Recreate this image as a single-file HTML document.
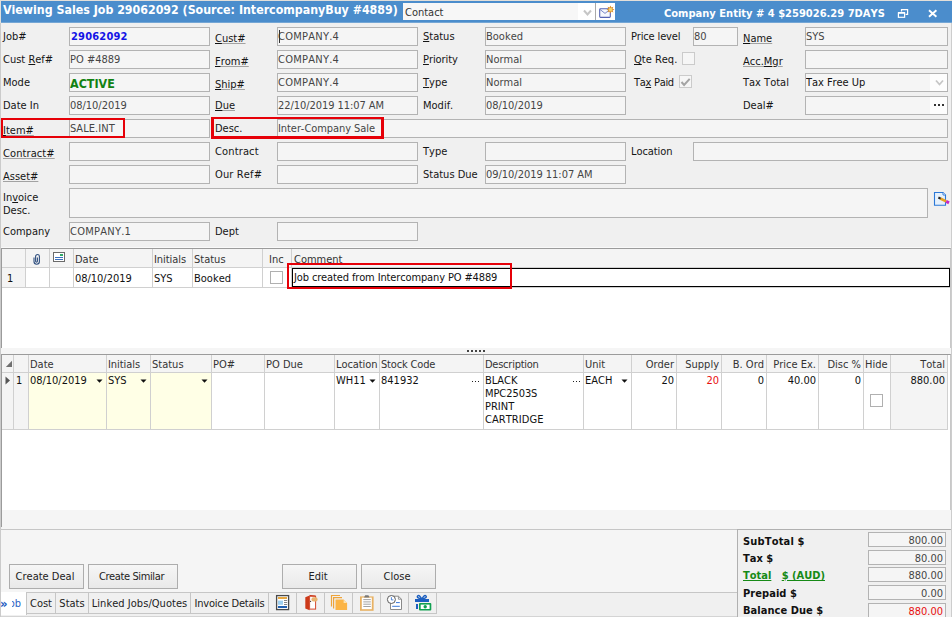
<!DOCTYPE html>
<html lang="en"><head><meta charset="utf-8"><title>Viewing Sales Job 29062092</title>
<style>
*{box-sizing:border-box;margin:0;padding:0}
html,body{width:952px;height:617px;overflow:hidden;background:#f0f0f0}
body{position:relative;font-family:"DejaVu Sans Condensed", "Liberation Sans", sans-serif;font-size:11px;line-height:13px;color:#111;font-kerning:none}
.a{position:absolute;white-space:nowrap}
.f{position:absolute;height:19px;border:1px solid #b3b3b3;background:#f5f5f5;color:#454545;padding:2px 0 0 0;white-space:nowrap;overflow:hidden}
.l{position:absolute;white-space:nowrap;color:#151515}
u{text-decoration:underline;text-decoration-thickness:1px;text-underline-offset:1px}
.lk{text-decoration:underline;text-decoration-thickness:1px;text-underline-offset:1px;text-decoration-color:#a2a2a2}
.lk u{text-decoration-color:#111}
.cb{position:absolute;width:13px;height:13px;border:1px solid #cbcbcb;background:#f6f6f6}
.vl{position:absolute;width:1px;background:#d0d0d0}
.hl{position:absolute;height:1px;background:#d0d0d0}
.h{position:absolute;white-space:nowrap;color:#333}
.c{position:absolute;white-space:nowrap;color:#111}
.r{text-align:right}
.btn{position:absolute;height:25px;border:1px solid #adadad;background:linear-gradient(#f6f6f6,#e9e9e9);text-align:center;padding:5px 3px 0 0;color:#222}
.tf{position:absolute;left:868px;width:78px;height:15px;border:1px solid #b3b3b3;background:#f5f5f5;color:#454545;text-align:right;padding:1px 2px 0 0;line-height:13px}
.tl{position:absolute;left:743px;font-weight:bold;letter-spacing:0;color:#111;white-space:nowrap}
.tab{position:absolute;top:593px;height:20px;border-right:1px solid #c6c6c6;padding-top:4px;color:#222;white-space:nowrap;text-align:center}
.red{position:absolute;border:2px solid #e60008}
</style></head>
<body>
<div class="a" style="left:0;top:0;width:952px;height:23px;background:#e3dfd9"></div>
<div class="a" style="left:1px;top:1px;width:951px;height:21px;background:#4b8dcc"></div>
<div class="a" style="left:1px;top:22px;width:951px;height:1px;background:#74a6d5"></div>
<div class="a" id="t1" style="letter-spacing:0;left:3px;top:2px;font-weight:bold;font-size:12.3px;line-height:16px;color:#fff">Viewing Sales Job 29062092 (Source: IntercompanyBuy #4889)</div>
<div class="a" id="t2" style="letter-spacing:0;left:664px;top:6px;font-weight:bold;font-size:11.05px;line-height:15px;color:#fff">Company Entity # 4 $259026.29 7DAYS</div>
<div class="a" style="left:403px;top:3px;width:212px;height:17px;background:#fff"></div>
<div class="a" style="left:403px;top:3px;width:175px;height:17px;background:#f7f7f7;color:#333;padding:3px 0 0 2px;font-size:11px">Contact</div>
<div class="a" style="left:595px;top:3px;width:1px;height:17px;background:#a9a9a9"></div>
<svg class="a" style="left:583px;top:9px" width="9" height="8" viewBox="0 0 9 8"><path d="M1 1.5 L4.5 5.5 L8 1.5" fill="none" stroke="#c6c6c6" stroke-width="2"/></svg>
<div class="l" style="left:3px;top:30px;">Job#</div>
<div class="l" style="left:3px;top:53px;">Cust <u>R</u>ef#</div>
<div class="l" style="left:3px;top:76px;">Mode</div>
<div class="l" style="left:3px;top:99px;">Date In</div>
<div class="l" style="left:3px;top:124px;"><span class=lk><u>I</u>tem#</span></div>
<div class="l" style="left:3px;top:147px;"><span style="letter-spacing:0.09px"><span class=lk>Contract#</span></span></div>
<div class="l" style="left:3px;top:170px;"><span class=lk>Asset#</span></div>
<div class="l" style="left:3px;top:191px;">In<u>v</u>oice<br>Desc.</div>
<div class="l" style="left:3px;top:225px;">Company</div>
<div class="f" style="left:69px;top:27px;width:141px;height:19px;"><b style="color:#1414e6;letter-spacing:0.2px;padding-left:1px">29062092</b></div>
<div class="f" style="left:69px;top:50px;width:141px;height:19px;">PO #4889</div>
<div class="f" style="left:69px;top:73px;width:141px;height:19px;"><b style="color:#128212;font-size:12.4px;position:relative;top:1px">ACTIVE</b></div>
<div class="f" style="left:69px;top:96px;width:141px;height:19px;"><span style="letter-spacing:-0.03px">08/10/2019</span></div>
<div class="f" style="left:69px;top:119px;width:141px;height:19px;"><span style="letter-spacing:0.07px">SALE.INT</span></div>
<div class="f" style="left:69px;top:142px;width:141px;height:19px;"></div>
<div class="f" style="left:69px;top:165px;width:141px;height:19px;"></div>
<div class="f" style="left:69px;top:188px;width:859px;height:30px;"></div>
<div class="f" style="left:69px;top:222px;width:141px;height:19px;"><span style="letter-spacing:0.25px">COMPANY.1</span></div>
<div class="l" style="left:215px;top:32px;"><span class=lk><u>C</u>ust#</span></div>
<div class="l" style="left:215px;top:55px;"><span class=lk><u>F</u>rom#</span></div>
<div class="l" style="left:215px;top:78px;"><span class=lk><u>S</u>hip#</span></div>
<div class="l" style="left:215px;top:99px;"><span class=lk><u>D</u>ue</span></div>
<div class="l" style="left:215px;top:122px;">Desc.</div>
<div class="l" style="left:215px;top:145px;"><span style="letter-spacing:0.14px">Contract</span></div>
<div class="l" style="left:215px;top:168px;"><span style="letter-spacing:0.14px">Our Ref#</span></div>
<div class="l" style="left:215px;top:225px;">Dept</div>
<div class="f" style="left:277px;top:27px;width:141px;height:19px;"><span style="letter-spacing:0.25px">COMPANY.4</span></div>
<div class="f" style="left:277px;top:50px;width:141px;height:19px;"><span style="letter-spacing:0.25px">COMPANY.4</span></div>
<div class="f" style="left:277px;top:73px;width:141px;height:19px;"><span style="letter-spacing:0.25px">COMPANY.4</span></div>
<div class="f" style="left:277px;top:96px;width:141px;height:19px;"><span style="letter-spacing:-0.06px">22/10/2019 11:07 AM</span></div>
<div class="f" style="left:277px;top:119px;width:671px;height:19px;"><span style="letter-spacing:-0.07px">Inter-Company Sale</span></div>
<div class="f" style="left:277px;top:142px;width:141px;height:19px;"></div>
<div class="f" style="left:277px;top:165px;width:141px;height:19px;"></div>
<div class="f" style="left:277px;top:222px;width:141px;height:19px;"></div>
<div class="a" style="left:279px;top:30px;width:1px;height:13px;background:#333"></div>
<div class="l" style="left:423px;top:30px;"><u>S</u>tatus</div>
<div class="l" style="left:423px;top:53px;"><span style="letter-spacing:-0.07px"><u>P</u>riority</span></div>
<div class="l" style="left:423px;top:76px;"><u>T</u>ype</div>
<div class="l" style="left:423px;top:99px;">Modif.</div>
<div class="l" style="left:423px;top:145px;">Type</div>
<div class="l" style="left:423px;top:168px;">Status Due</div>
<div class="f" style="left:485px;top:27px;width:141px;height:19px;">Booked</div>
<div class="f" style="left:485px;top:50px;width:141px;height:19px;">Normal</div>
<div class="f" style="left:485px;top:73px;width:141px;height:19px;">Normal</div>
<div class="f" style="left:485px;top:96px;width:141px;height:19px;"><span style="letter-spacing:-0.03px">08/10/2019</span></div>
<div class="f" style="left:485px;top:142px;width:141px;height:19px;"></div>
<div class="f" style="left:485px;top:165px;width:141px;height:19px;"><span style="letter-spacing:-0.03px">09/10/2019 11:07 AM</span></div>
<div class="l" style="left:631px;top:30px;"><span style="letter-spacing:-0.15px">Price level</span></div>
<div class="l" style="left:634px;top:53px;"><u>Q</u>te Req.</div>
<div class="l" style="left:634px;top:76px;"><span style="letter-spacing:-0.29px">Ta<u>x</u> Paid</span></div>
<div class="l" style="left:631px;top:145px;"><span style="letter-spacing:-0.07px">Location</span></div>
<div class="f" style="left:693px;top:27px;width:45px;height:19px;">80</div>
<div class="cb" style="left:682px;top:52px"></div>
<div class="cb" style="left:679px;top:75px"></div>
<svg class="a" style="left:680px;top:76px" width="11" height="11" viewBox="0 0 11 11"><path d="M1.5 6 L4.1 9 L9.7 2.9" fill="none" stroke="#a4a4a4" stroke-width="2"/></svg>
<div class="f" style="left:693px;top:142px;width:255px;height:19px;"></div>
<div class="l" style="left:743px;top:32px;"><span class=lk><u>N</u>ame</span></div>
<div class="l" style="left:743px;top:55px;"><span class=lk>Acc.<u>M</u>gr</span></div>
<div class="l" style="left:743px;top:76px;">Tax Total</div>
<div class="l" style="left:743px;top:99px;">Deal#</div>
<div class="f" style="left:805px;top:27px;width:143px;height:19px;">SYS</div>
<div class="f" style="left:805px;top:50px;width:143px;height:19px;"></div>
<div class="f" style="left:805px;top:73px;width:143px;height:19px;color:#111"><span style="letter-spacing:-0.05px">Tax Free Up</span></div>
<div class="f" style="left:805px;top:96px;width:143px;height:19px;"></div>
<div class="a" style="left:930px;top:74px;width:17px;height:17px;background:#fdfdfd"></div>
<svg class="a" style="left:935px;top:79px" width="9" height="8" viewBox="0 0 9 8"><path d="M1 1.5 L4.5 5.5 L8 1.5" fill="none" stroke="#c6c6c6" stroke-width="1.8"/></svg>
<div class="a" style="left:930px;top:97px;width:17px;height:17px;background:#fdfdfd"></div>
<div class="a" style="left:934px;top:104px;width:2px;height:2px;background:#333;box-shadow:4px 0 0 #333,8px 0 0 #333"></div>
<div class="red" style="left:1px;top:118px;width:124px;height:20px"></div>
<div class="red" style="left:211px;top:117px;width:173px;height:22px;border-width:2px 3px 3px 3px"></div>
<div class="a" style="left:1px;top:247px;width:950px;height:1px;background:#f9f9f9"></div>
<div class="a" style="left:1px;top:248px;width:950px;height:100px;background:#fff;border:1px solid #9b9b9b;border-right-color:#c8c8c8;border-bottom:0"></div>
<div class="a" style="left:2px;top:249px;width:948px;height:18px;background:#f4f4f4"></div>
<div class="a" style="left:2px;top:268px;width:24px;height:19px;background:#f4f4f4"></div>
<div class="hl" style="left:2px;top:267px;width:948px"></div>
<div class="hl" style="left:2px;top:287px;width:948px"></div>
<div class="vl" style="left:25px;top:249px;height:38px"></div>
<div class="vl" style="left:49px;top:249px;height:38px"></div>
<div class="vl" style="left:73px;top:249px;height:38px"></div>
<div class="vl" style="left:152px;top:249px;height:38px"></div>
<div class="vl" style="left:192px;top:249px;height:38px"></div>
<div class="vl" style="left:262px;top:249px;height:38px"></div>
<div class="vl" style="left:291px;top:249px;height:38px"></div>
<div class="h" style="left:75px;top:253px;">Date</div>
<div class="h" style="left:154px;top:253px;"><span style="letter-spacing:-0.07px">Initials</span></div>
<div class="h" style="left:194px;top:253px;">Status</div>
<div class="h" style="left:269px;top:253px;">Inc</div>
<div class="h" style="left:294px;top:253px;">Comment</div>
<div class="c" style="left:7px;top:272px;">1</div>
<div class="c" style="left:75px;top:272px;"><span style="letter-spacing:-0.03px">08/10/2019</span></div>
<div class="c" style="left:154px;top:272px;">SYS</div>
<div class="c" style="left:194px;top:272px;">Booked</div>
<div class="cb" style="left:270px;top:271px;background:#fff;border-color:#b0b0b0"></div>
<div class="a" style="left:292px;top:268px;width:658px;height:19px;border:1px solid #000;background:#fff;padding:2px 0 0 1px;color:#111" id="cm"><span style="letter-spacing:-0.13px">Job created from Intercompany PO #4889</span></div>
<div class="red" style="left:287px;top:263px;width:225px;height:26px"></div>
<div class="a" style="left:0;top:348px;width:952px;height:6px;background:#f5f5f5"></div>
<div class="a" style="left:467px;top:350px;width:2px;height:2px;background:#444;box-shadow:4px 0 0 #444,8px 0 0 #444,12px 0 0 #444,16px 0 0 #444"></div>
<div class="a" style="left:1px;top:354px;width:950px;height:156px;background:#fff;border:1px solid #9b9b9b;border-right-color:#c8c8c8;border-bottom:0"></div>
<div class="a" style="left:2px;top:355px;width:946px;height:18px;background:#f4f4f4"></div>
<div class="a" style="left:2px;top:373px;width:26px;height:56px;background:#f4f4f4"></div>
<div class="a" style="left:29px;top:373px;width:182px;height:56px;background:#ffffe6"></div>
<div class="a" style="left:891px;top:373px;width:57px;height:56px;background:#f4f4f4"></div>
<div class="hl" style="left:2px;top:372px;width:946px"></div>
<div class="hl" style="left:2px;top:429px;width:946px"></div>
<div class="vl" style="left:13px;top:355px;height:75px"></div>
<div class="vl" style="left:28px;top:355px;height:75px"></div>
<div class="vl" style="left:106px;top:355px;height:75px"></div>
<div class="vl" style="left:150px;top:355px;height:75px"></div>
<div class="vl" style="left:211px;top:355px;height:75px"></div>
<div class="vl" style="left:264px;top:355px;height:75px"></div>
<div class="vl" style="left:334px;top:355px;height:75px"></div>
<div class="vl" style="left:379px;top:355px;height:75px"></div>
<div class="vl" style="left:483px;top:355px;height:75px"></div>
<div class="vl" style="left:583px;top:355px;height:75px"></div>
<div class="vl" style="left:631px;top:355px;height:75px"></div>
<div class="vl" style="left:676px;top:355px;height:75px"></div>
<div class="vl" style="left:721px;top:355px;height:75px"></div>
<div class="vl" style="left:766px;top:355px;height:75px"></div>
<div class="vl" style="left:818px;top:355px;height:75px"></div>
<div class="vl" style="left:863px;top:355px;height:75px"></div>
<div class="vl" style="left:890px;top:355px;height:75px"></div>
<div class="vl" style="left:947px;top:355px;height:75px"></div>
<div class="a" style="left:2px;top:510px;width:950px;height:19px;background:#f5f5f5"></div>
<div class="a" style="left:1px;top:510px;width:1px;height:17px;background:#9b9b9b"></div>
<div class="h" style="left:30px;top:358px;">Date</div>
<div class="h" style="left:108px;top:358px;"><span style="letter-spacing:-0.07px">Initials</span></div>
<div class="h" style="left:152px;top:358px;">Status</div>
<div class="h" style="left:213px;top:358px;">PO#</div>
<div class="h" style="left:266px;top:358px;">PO Due</div>
<div class="h" style="left:336px;top:358px;"><span style="letter-spacing:-0.07px">Location</span></div>
<div class="h" style="left:381px;top:358px;"><span style="letter-spacing:-0.17px">Stock Code</span></div>
<div class="h" style="left:485px;top:358px;"><span style="letter-spacing:-0.25px">Description</span></div>
<div class="h" style="left:585px;top:358px;">Unit</div>
<div class="h r" style="left:594px;width:80px;top:358px">Order</div>
<div class="h r" style="left:639px;width:80px;top:358px">Supply</div>
<div class="h r" style="left:684px;width:80px;top:358px">B. Ord</div>
<div class="h r" style="left:736px;width:80px;top:358px">Price Ex.</div>
<div class="h r" style="left:781px;width:80px;top:358px">Disc %</div>
<div class="h" style="left:865px;top:358px;">Hide</div>
<div class="h r" style="left:865px;width:80px;top:358px">Total</div>
<div class="c" style="left:16px;top:374px;">1</div>
<div class="c" style="left:30px;top:374px;"><span style="letter-spacing:-0.03px">08/10/2019</span></div>
<div class="c" style="left:108px;top:374px;">SYS</div>
<div class="c" style="left:336px;top:374px;">WH11</div>
<div class="c" style="left:381px;top:374px;">841932</div>
<div class="c" style="left:485px;top:374px;">BLACK<br><span style="letter-spacing:-0.07px">MPC2503S</span><br>PRINT<br><span style="letter-spacing:0.06px">CARTRIDGE</span></div>
<div class="c" style="left:585px;top:374px;">EACH</div>
<div class="c r" style="left:594px;width:80px;top:374px;">20</div>
<div class="c r" style="left:639px;width:80px;top:374px;color:#e81010">20</div>
<div class="c r" style="left:684px;width:80px;top:374px;">0</div>
<div class="c r" style="left:736px;width:80px;top:374px;">40.00</div>
<div class="c r" style="left:781px;width:80px;top:374px;">0</div>
<div class="c r" style="left:865px;width:80px;top:374px;">880.00</div>
<svg class="a" style="left:96px;top:379px" width="7" height="4" viewBox="0 0 7 4"><path d="M0.5 0.5 H6.5 L3.5 3.8 Z" fill="#111"/></svg>
<svg class="a" style="left:140px;top:379px" width="7" height="4" viewBox="0 0 7 4"><path d="M0.5 0.5 H6.5 L3.5 3.8 Z" fill="#111"/></svg>
<svg class="a" style="left:201px;top:379px" width="7" height="4" viewBox="0 0 7 4"><path d="M0.5 0.5 H6.5 L3.5 3.8 Z" fill="#111"/></svg>
<svg class="a" style="left:369px;top:379px" width="7" height="4" viewBox="0 0 7 4"><path d="M0.5 0.5 H6.5 L3.5 3.8 Z" fill="#111"/></svg>
<svg class="a" style="left:621px;top:379px" width="7" height="4" viewBox="0 0 7 4"><path d="M0.5 0.5 H6.5 L3.5 3.8 Z" fill="#111"/></svg>
<svg class="a" style="left:5px;top:376px" width="6" height="9" viewBox="0 0 6 9"><path d="M0.5 0.5 L5 4.5 L0.5 8.5 Z" fill="#555"/></svg>
<svg class="a" style="left:5px;top:360px" width="8" height="8" viewBox="0 0 8 8"><path d="M7 0.8 V7 H0.8 Z" fill="#707070"/></svg>
<div class="a" style="left:472px;top:381px;width:1px;height:1px;background:#222;box-shadow:3px 0 0 #222,6px 0 0 #222"></div>
<div class="a" style="left:573px;top:381px;width:1px;height:1px;background:#222;box-shadow:3px 0 0 #222,6px 0 0 #222"></div>
<div class="cb" style="left:870px;top:394px;background:#fff;border-color:#b0b0b0"></div>
<div class="a" style="left:0;top:529px;width:952px;height:64px;background:#f5f5f5;border-top:1px solid #c6c6c6"></div>
<div class="a" style="left:0;top:592px;width:952px;height:25px;background:#f0f0f0;border-top:1px solid #c6c6c6"></div>
<div class="a" style="left:0;top:616px;width:952px;height:1px;background:#d4d4d4"></div>
<div class="a" style="left:737px;top:529px;width:215px;height:88px;background:#f0f0f0;border-left:1px solid #b0b0b0;border-top:1px solid #b0b0b0"></div>
<div class="tl" style="top:535px"><span style="letter-spacing:0.17px">SubTotal $</span></div>
<div class="tf" style="top:532px">800.00</div>
<div class="tl" style="top:552px">Tax $</div>
<div class="tf" style="top:550px">80.00</div>
<div class="tl" style="top:569px"><span style="color:#168a16"><u>Total</u>&nbsp;&nbsp; <u>$ (AUD)</u></span></div>
<div class="tf" style="top:567px">880.00</div>
<div class="tl" style="top:587px"><span style="letter-spacing:0.06px">Prepaid $</span></div>
<div class="tf" style="top:585px">0.00</div>
<div class="tl" style="top:604px"><span style="letter-spacing:0.04px">Balance Due $</span></div>
<div class="tf" style="top:603px"><span style="color:#e81010">880.00</span></div>
<div class="btn" style="left:9px;top:564px;width:75px">Create Deal</div>
<div class="btn" style="left:88px;top:564px;width:90px"><span style="letter-spacing:-0.38px">Create Similar</span></div>
<div class="btn" style="left:282px;top:564px;width:75px">Edit</div>
<div class="btn" style="left:361px;top:564px;width:75px">Close</div>
<div class="a" style="left:1px;top:592px;width:26px;height:23px;background:#fff;border-right:1px solid #c6c6c6"></div>
<div class="a" style="left:0px;top:597px;color:#2059c0;font-size:13px;font-weight:bold;letter-spacing:0">&raquo;</div>
<div class="a" style="left:12px;top:597px;color:#2a62c4;width:9px;overflow:hidden;direction:rtl">Job</div>
<div class="tab" style="left:27px;width:29px">Cost</div>
<div class="tab" style="left:56px;width:33px">Stats</div>
<div class="tab" style="left:89px;width:102px"><span style="letter-spacing:0.04px">Linked Jobs/Quotes</span></div>
<div class="tab" style="left:191px;width:78px"><span style="letter-spacing:-0.18px">Invoice Details</span></div>
<div class="tab" style="left:269px;width:28px"></div>
<div class="tab" style="left:297px;width:28px"></div>
<div class="tab" style="left:325px;width:28px"></div>
<div class="tab" style="left:353px;width:28px"></div>
<div class="tab" style="left:381px;width:28px"></div>
<div class="tab" style="left:409px;width:28px"></div>
<div class="a" style="left:27px;top:613px;width:410px;height:1px;background:#c6c6c6"></div>
<svg class="a" style="left:0;top:0" width="952" height="617" viewBox="0 0 952 617"><path d="M901.5 11.5 V9.6 H907.6 V14.4 H905.6" fill="none" stroke="#fff" stroke-width="1.2"/><rect x="898.4" y="12.9" width="6.2" height="4.4" fill="none" stroke="#fff" stroke-width="1.2"/><rect x="898" y="12" width="7" height="1.6" fill="#fff"/><path d="M929 10.2 L936.4 16.8 M936.4 10.2 L929 16.8" fill="none" stroke="#fff" stroke-width="1.9"/><rect x="599.7" y="8.8" width="10.6" height="8.6" rx="0.8" fill="#f6f8fd" stroke="#5563b4" stroke-width="1.1"/><path d="M600.2 9.6 L605 13.4 L609.8 9.6" fill="none" stroke="#6a78c0" stroke-width="0.9"/><path d="M610.5 5.6 l0.9 2 l2-0.9 l-0.9 2 l2 0.9 l-2 0.9 l0.9 2 l-2-0.9 l-0.9 2 l-0.9-2 l-2 0.9 l0.9-2 l-2-0.9 l2-0.9 l-0.9-2 l2 0.9 z" fill="#d98a24"/><circle cx="610.5" cy="9.6" r="1.8" fill="#f6d268"/><path d="M934.5 192.5 H943 L945.5 195 V205.3 H934.5 Z" fill="#e6f1fc" stroke="#2b78d8" stroke-width="1.1"/><path d="M943 192.5 V195 H945.5" fill="#fff" stroke="#2b78d8" stroke-width="0.9"/><path d="M940.3 198.5 L946.2 201.4" stroke="#e8a020" stroke-width="2.6"/><path d="M938.4 197.5 L940.6 198.7" stroke="#222" stroke-width="2"/><path d="M946.2 201.4 L949 202.8" stroke="#c626c6" stroke-width="3"/><path d="M34 257.5 V261.6 a2.7 2.7 0 0 0 5.4 0 V256.4 a1.9 1.9 0 0 0 -3.8 0 V261.2 a0.9 0.9 0 0 0 1.8 0 V257.5" fill="none" stroke="#2f4f7f" stroke-width="1.1"/><rect x="53.5" y="252.5" width="11" height="9" fill="#fff" stroke="#6a6a6a" stroke-width="1"/><rect x="60" y="254" width="3" height="2" fill="#30a868"/><path d="M55 257.5 H63 M55 259.5 H63" stroke="#3a70c0" stroke-width="1"/><rect x="276.6" y="595.6" width="12" height="14" fill="#fff" stroke="#4a4a4a" stroke-width="1.3"/><rect x="278" y="597" width="9" height="2" fill="#e8a840"/><rect x="278" y="600.6" width="5" height="4.2" fill="#9fd0f0"/><path d="M284 600.5 H287.2 M284 602.5 H287.2 M284 604.5 H287.2" stroke="#666" stroke-width="0.8"/><rect x="278" y="606" width="9" height="2" fill="#1f5fb0"/><path d="M305.3 597.2 L309.6 595.4 V610.3 L305.3 608.6 Z" fill="#cc3a1a"/><rect x="309.6" y="596.3" width="6" height="12.8" fill="#fff" stroke="#d4482c" stroke-width="1"/><path d="M309.6 595.4 L315.6 596" stroke="#cc3a1a" stroke-width="1"/><rect x="311.4" y="597.2" width="6.2" height="4.4" rx="2" fill="#e8b470"/><circle cx="310.6" cy="601.4" r="0.6" fill="#333"/><path d="M331.5 606.5 V595.5 H340" fill="none" stroke="#eea43a" stroke-width="1.2"/><path d="M333.6 608.5 V597.6 H342" fill="none" stroke="#eea43a" stroke-width="1.2"/><path d="M335.5 599.4 H343.6 L347.1 603 V610 H335.5 Z" fill="#fbb445"/><path d="M343.6 599.4 L347.1 603 H343.6 Z" fill="#fde2b0"/><rect x="360" y="596.4" width="13.6" height="14.4" fill="#e8b264"/><rect x="361.8" y="597.6" width="10" height="11.6" fill="#fff"/><path d="M364 597.4 L365.2 595.2 H368.4 L369.6 597.4 Z" fill="#777"/><path d="M363.3 599.6 H370.8 M363.3 601.9 H370.8 M363.3 604.2 H370.8 M363.3 606.5 H370.8" stroke="#8a8a8a" stroke-width="0.8"/><path d="M390.5 598 V609.5 H401.5 V599.2 L398.4 596.2 H393 Z" fill="#fff" stroke="#8a8a8a" stroke-width="1"/><path d="M398.4 596.2 V599.2 H401.5" fill="none" stroke="#8a8a8a" stroke-width="0.9"/><path d="M396 602.6 H399.8 M392.2 606.3 H399.8" stroke="#3b78d8" stroke-width="1"/><circle cx="391.4" cy="599.5" r="4" fill="#fff" stroke="#5a5a5a" stroke-width="1"/><path d="M391.4 597.2 V599.9 H393.4" fill="none" stroke="#3b78d8" stroke-width="0.9"/><path d="M421.8 599.2 C419.4 598.8 416.2 597.4 417.6 595.9 C419 594.6 420.8 596.8 421.8 599.2 C422.8 596.8 424.6 594.6 426 595.9 C427.4 597.4 424.2 598.8 421.8 599.2 Z" fill="none" stroke="#1c5fc0" stroke-width="1.4"/><rect x="415" y="599" width="14" height="3" fill="#1c5fc0"/><rect x="416" y="604" width="2" height="5" fill="#1c5fc0"/><rect x="419" y="603" width="12.3" height="7.6" rx="1" fill="#10a050"/><rect x="420.7" y="604.6" width="8.9" height="4.4" fill="#fff"/><circle cx="425.2" cy="606.8" r="1.7" fill="#10a050"/></svg>
<div class="a" style="left:0;top:23px;width:1px;height:594px;background:#cbcbcb"></div>
<div class="a" style="left:951px;top:23px;width:1px;height:594px;background:#cdcdcd"></div>
</body></html>
